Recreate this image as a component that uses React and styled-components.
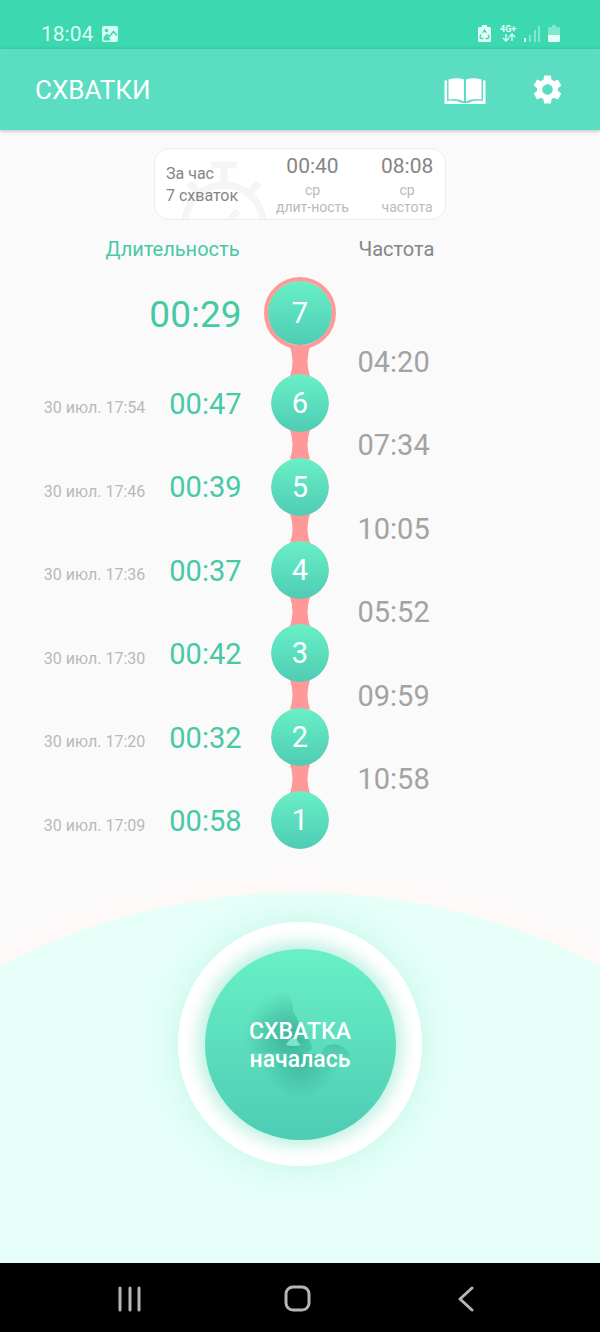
import React from 'react'
import styled, { createGlobalStyle } from 'styled-components'
import { MdSettings } from 'react-icons/md'

const GlobalStyle = createGlobalStyle`
*{
    box-sizing: border-box;
}
body{
    margin: 0;
    background-color: #fafafa;
    font-family: Roboto, "Noto Sans", sans-serif;
}
button{
    border: 0;
    padding: 0;
    background: none;
    font-family: inherit;
    color: inherit;
    cursor: pointer;
}
`

const Screen = styled.div`
min-height: 100vh;
display: flex;
flex-direction: column;
`

const StatusBar = styled.div`
height: 49px;
padding: 18px 38px 0 41px;
display: flex;
align-items: flex-start;
justify-content: space-between;
background-color: #3cd8b0;
color: #d9fff3;
font-size: 21px;
line-height: 32px;
`

const StatusGroup = styled.div`
height: 32px;
display: flex;
align-items: center;
gap: 8px;
`

const AppBar = styled.header`
height: 81px;
padding: 0 35px;
display: flex;
align-items: center;
justify-content: space-between;
background-color: #5addc0;
box-shadow: 0 1px 4px rgba(0, 0, 0, 0.25);
color: white;
h1{
    margin: 0;
    font-size: 26px;
    font-weight: 400;
}
`

const Actions = styled.div`
display: flex;
align-items: center;
gap: 44px;
button{
    display: flex;
}
`

const Summary = styled.section`
align-self: center;
width: 292px;
height: 72px;
margin-top: 18px;
padding: 0 11px;
display: flex;
gap: 32px;
border: 1px solid #ececec;
border-radius: 15px;
background-color: white;
overflow: hidden;
`

const HourCount = styled.div`
position: relative;
width: 78px;
padding-top: 14px;
color: #858585;
font-size: 16px;
line-height: 22px;
svg{
    position: absolute;
    top: 12px;
    left: 12px;
}
p{
    position: relative;
    margin: 0;
}
`

const Average = styled.div`
padding-top: 5px;
text-align: center;
color: #b9b9b9;
font-size: 14px;
line-height: 17px;
strong{
    display: block;
    margin-bottom: 3px;
    color: #858585;
    font-size: 21px;
    font-weight: 400;
    line-height: 25px;
}
`

const Columns = styled.div`
display: grid;
grid-template-columns: 1fr 73px 1fr;
`

const Labels = styled(Columns)`
margin-top: 16px;
line-height: 26px;
`

const Label = styled.h2`
grid-column: ${props => props.$column};
margin: 0;
padding: ${props => props.$column === 1 ? '0 24px 0 0' : '0 0 0 22px'};
text-align: ${props => props.$column === 1 ? 'right' : 'left'};
color: ${props => props.$column === 1 ? '#46c9a5' : '#858585'};
font-size: 20px;
font-weight: 400;
`

const Timeline = styled(Columns)`
height: 586px;
margin-top: 15px;
`

const Durations = styled.div`
padding-right: 22px;
display: flex;
flex-direction: column;
`

const Duration = styled.div`
flex: ${props => props.$current ? '0 0 75px' : '1'};
margin-bottom: ${props => props.$current ? '10px' : '0'};
display: flex;
align-items: center;
justify-content: flex-end;
gap: 24px;
color: #46c9a5;
font-size: ${props => props.$current ? '37px' : '29px'};
time{
    padding-top: 8px;
    color: #b9b9b9;
    font-size: 16px;
}
`

const Beads = styled.div`
padding-bottom: 14px;
display: flex;
flex-direction: column;
align-items: center;
svg{
    flex: 1 1 0;
    height: 0;
    width: 20px;
}
`

const Bead = styled.div`
flex: none;
width: ${props => props.$current ? '72px' : '58px'};
height: ${props => props.$current ? '72px' : '58px'};
display: flex;
align-items: center;
justify-content: center;
border: ${props => props.$current ? '4px solid #ff9999' : '0'};
border-radius: 50%;
background-color: #ff9999;
background-image: linear-gradient(#69f0c6, #4eccb4);
background-origin: padding-box;
background-clip: padding-box;
color: white;
font-size: 29px;
z-index: 1;
`

const Intervals = styled.div`
padding: 43px 0 42px 21px;
display: flex;
flex-direction: column;
color: #a3a3a3;
font-size: 29px;
`

const Interval = styled.div`
flex: 1;
display: flex;
align-items: center;
`

const StartArea = styled.main`
flex: 1;
padding: 59px 0 97px;
display: flex;
justify-content: center;
align-items: flex-start;
background: radial-gradient(circle at 50% 682px, #e6fff9 652px, #fff8f7 653px, #fafafa 682px);
`

const StartButton = styled.button`
width: 244px;
height: 244px;
border-radius: 50%;
display: flex;
align-items: center;
justify-content: center;
background: radial-gradient(circle, #c5f3e6 94px, #f3fcf9 108px, white 116px);
box-shadow: 0 0 36px rgba(70, 210, 175, 0.22);
`

const StartFace = styled.span`
width: 191px;
height: 191px;
display: grid;
place-items: center;
border-radius: 50%;
background: linear-gradient(#69f0c6, #4eccb4);
color: white;
font-size: 23px;
font-weight: 500;
line-height: 28px;
svg, span{
    grid-area: 1 / 1;
}
span{
    z-index: 1;
    padding-top: 4px;
}
`

const NavBar = styled.nav`
height: 69px;
padding: 2px 126px 0 118px;
display: flex;
align-items: center;
justify-content: space-between;
background-color: black;
button{
    display: flex;
}
svg{
    fill: none;
    stroke: #b5b5b5;
    stroke-width: 3;
    stroke-linecap: round;
    stroke-linejoin: round;
}
`

const contractions = [
    { number: 7, duration: '00:29', interval: '04:20' },
    { number: 6, duration: '00:47', interval: '07:34', date: '30 июл. 17:54' },
    { number: 5, duration: '00:39', interval: '10:05', date: '30 июл. 17:46' },
    { number: 4, duration: '00:37', interval: '05:52', date: '30 июл. 17:36' },
    { number: 3, duration: '00:42', interval: '09:59', date: '30 июл. 17:30' },
    { number: 2, duration: '00:32', interval: '10:58', date: '30 июл. 17:20' },
    { number: 1, duration: '00:58', date: '30 июл. 17:09' },
]

function PictureIcon() {
    return (
        <svg width="18" height="18" viewBox="0 0 18 18">
            <rect x="1" y="1" width="16" height="16" rx="2" fill="#d9fff3" />
            <path d="M3 13.500 6.500 9l3 3L13 7.500l3 3.500v4.500H3z" fill="#d9fff3" />
            <path d="M3 12.500 6 9.500l2.500 2 4-5 3.500 4" fill="none" stroke="#3cd8b0" strokeWidth="1.500" />
            <path d="M2.500 13.500 6 10.500l2.500 2.500 1 2.500h-7z" fill="#3cd8b0" />
            <circle cx="5.500" cy="5.500" r="1.700" fill="#3cd8b0" />
        </svg>
    )
}

function StatusIcons() {
    return (
        <svg width="84" height="20" viewBox="0 0 84 20" fill="#e4fff7">
            <path d="M4 1h5v2h2.500Q13 3 13 4.500v12q0 1.500-1.500 1.500h-10Q0 18 0 16.500v-12Q0 3 1.500 3H4z" />
            <path d="M4.500 9 6.500 6l2 3M10 10.500l1 2.500-1 1.500H7.500M5.500 14.500H3L2 13l1-2.500" fill="none" stroke="#3cd8b0" strokeWidth="1.300" />
            <text x="22" y="8" fontSize="9" fontWeight="700">4G+</text>
            <path d="M28 10v7m-3-3 3 3 3-3M34 17v-7m-3 3 3-3 3 3" fill="none" stroke="#d9fff3" strokeWidth="1.400" />
            <path d="M46 14h2v4h-2z" />
            <path d="M51 11h2v7h-2zM56 6h2v12h-2zM60 2h2v16h-2z" opacity=".4" />
            <path d="M74 1h4v2h2.500Q82 3 82 4.500V12H70V4.500Q70 3 71.500 3H74z" opacity=".4" />
            <path d="M70 11h12v5.500q0 1.500-1.500 1.500h-9q-1.500 0-1.500-1.500z" />
        </svg>
    )
}

function BookIcon() {
    return (
        <svg width="42" height="30" viewBox="0 -3 42 30" fill="white">
            <path d="M4.500 1.500Q13-1 20 1.500v22Q13 20 4.500 21.500zM37.500 1.500Q29-1 22 1.500v22q7-3.500 15.500-2z" />
            <path d="M.500 2.500h2.500V23q8-1.500 15 2h6q7-3.500 15-2V2.500h2.500V26H.500z" />
        </svg>
    )
}

function Stopwatch() {
    return (
        <svg width="94" height="94" viewBox="0 0 94 94" fill="none" stroke="#f5f5f5" strokeWidth="7">
            <circle cx="46" cy="63" r="39" />
            <path d="M33 4h26M46 4v18M11 22l9 9M81 22l-9 9M46 65l14-15" />
        </svg>
    )
}

function Connector() {
    return (
        <svg viewBox="0 0 20 26" preserveAspectRatio="none" fill="#ff9999" overflow="visible">
            <path d="M0-2Q5 13 0 28H20Q15 13 20-2z" />
        </svg>
    )
}

function BabyShadow() {
    return (
        <svg width="120" height="130" viewBox="0 0 120 130">
            <defs>
                <radialGradient id="head" gradientUnits="userSpaceOnUse" cx="50" cy="58" r="46">
                    <stop offset="0" stopColor="#2a9c83" stopOpacity=".65" />
                    <stop offset=".4" stopColor="#2a9c83" stopOpacity=".4" />
                    <stop offset="1" stopColor="#2a9c83" stopOpacity="0" />
                </radialGradient>
                <radialGradient id="body" gradientUnits="userSpaceOnUse" cx="60" cy="80" r="40">
                    <stop offset="0" stopColor="#2a9c83" stopOpacity=".55" />
                    <stop offset="1" stopColor="#2a9c83" stopOpacity="0" />
                </radialGradient>
                <linearGradient id="arm" x1="0" y1="0" x2="0" y2="1">
                    <stop offset="0" stopColor="#2a9c83" stopOpacity=".35" />
                    <stop offset="1" stopColor="#2a9c83" stopOpacity="0" />
                </linearGradient>
            </defs>
            <path d="M45 12q8 6 8 20 6 10 11 23 8 8 8 14-1 5-10 5H0V12z" fill="url(#head)" />
            <path d="M0 74h62q12 0 18 2h40v54H0z" fill="url(#body)" />
            <path d="M81 76q2-10 12-11 10 0 17 10v10H78z" fill="url(#arm)" />
            <path d="M46 66q3-7 10-8 1 5 5 8-7 2-15 0z" fill="#7ae6cc" />
        </svg>
    )
}

function App() {
    return (
        <Screen>
            <GlobalStyle />
            <StatusBar>
                <StatusGroup>
                    <span>18:04</span>
                    <PictureIcon />
                </StatusGroup>
                <StatusGroup>
                    <StatusIcons />
                </StatusGroup>
            </StatusBar>
            <AppBar>
                <h1>СХВАТКИ</h1>
                <Actions>
                    <button aria-label="Справка"><BookIcon /></button>
                    <button aria-label="Настройки"><MdSettings size={35} /></button>
                </Actions>
            </AppBar>
            <Summary>
                <HourCount>
                    <Stopwatch />
                    <p>За час</p>
                    <p>7 схваток</p>
                </HourCount>
                <Average>
                    <strong>00:40</strong>
                    ср<br />длит-ность
                </Average>
                <Average>
                    <strong>08:08</strong>
                    ср<br />частота
                </Average>
            </Summary>
            <Labels>
                <Label $column={1}>Длительность</Label>
                <Label $column={3}>Частота</Label>
            </Labels>
            <Timeline>
                <Durations>
                    {contractions.map(item => (
                        <Duration key={item.number} $current={!item.date}>
                            {item.date && <time>{item.date}</time>}
                            <span>{item.duration}</span>
                        </Duration>
                    ))}
                </Durations>
                <Beads>
                    {contractions.map(item => (
                        <React.Fragment key={item.number}>
                            {item.date && <Connector />}
                            <Bead $current={!item.date}>{item.number}</Bead>
                        </React.Fragment>
                    ))}
                </Beads>
                <Intervals>
                    {contractions.filter(item => item.interval).map(item => (
                        <Interval key={item.number}>{item.interval}</Interval>
                    ))}
                </Intervals>
            </Timeline>
            <StartArea>
                <StartButton>
                    <StartFace>
                        <BabyShadow />
                        <span>СХВАТКА<br />началась</span>
                    </StartFace>
                </StartButton>
            </StartArea>
            <NavBar>
                <button aria-label="Недавние">
                    <svg width="24" height="26" viewBox="0 0 24 26"><path d="M2 2v22M12 2v22M21 2v22" /></svg>
                </button>
                <button aria-label="Домой">
                    <svg width="28" height="28" viewBox="0 0 28 28"><rect x="2" y="2" width="23" height="23" rx="7" /></svg>
                </button>
                <button aria-label="Назад">
                    <svg width="20" height="26" viewBox="0 0 20 26"><path d="M18 2 6 13l12 11" /></svg>
                </button>
            </NavBar>
        </Screen>
    )
}

export default App
